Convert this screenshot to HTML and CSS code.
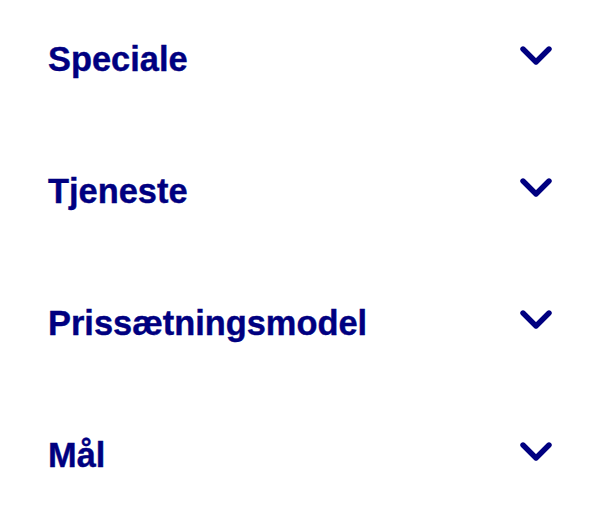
FILE: index.html
```html
<!DOCTYPE html>
<html lang="da">
<head>
  <meta charset="UTF-8" />
  <meta name="viewport" content="width=device-width, initial-scale=1.0"/>
  <title>Filtre</title>
  <link rel="stylesheet" href="styles.css">
</head>
<body>

  <!-- Filter accordion -->
  <div class="filters">
    <div class="filter-row">
      <span class="filter-title">Speciale</span>
      <svg class="chevron" viewBox="0 0 32 20"><polyline points="3,4 16,17 29,4" /></svg>
    </div>
    <div class="filter-row">
      <span class="filter-title">Tjeneste</span>
      <svg class="chevron" viewBox="0 0 32 20"><polyline points="3,4 16,17 29,4" /></svg>
    </div>
    <div class="filter-row">
      <span class="filter-title">Prissætningsmodel</span>
      <svg class="chevron" viewBox="0 0 32 20"><polyline points="3,4 16,17 29,4" /></svg>
    </div>
    <div class="filter-row">
      <span class="filter-title">Mål</span>
      <svg class="chevron" viewBox="0 0 32 20"><polyline points="3,4 16,17 29,4" /></svg>
    </div>
  </div>

</body>
</html>
```

FILE: styles.css
```css
* {
  margin: 0;
  padding: 0;
  box-sizing: border-box;
  font-family: 'Liberation Sans', Arial, sans-serif;
}

body {
  background: #ffffff;
  color: #000080;
}

.filters {
  padding: 0 48px;
}

.filter-row {
  display: flex;
  justify-content: space-between;
  align-items: center;
  height: 132px;
  padding-bottom: 14px;
  cursor: pointer;
}

.filter-title {
  font-size: 34.4px;
  font-weight: bold;
  line-height: 40px;
  -webkit-text-stroke: 0.4px #000080;
}

.chevron {
  width: 32px;
  height: 20px;
  margin-top: -8px;
}

.chevron polyline {
  fill: none;
  stroke: #000080;
  stroke-width: 5.4;
  stroke-linecap: round;
  stroke-linejoin: round;
}
```
